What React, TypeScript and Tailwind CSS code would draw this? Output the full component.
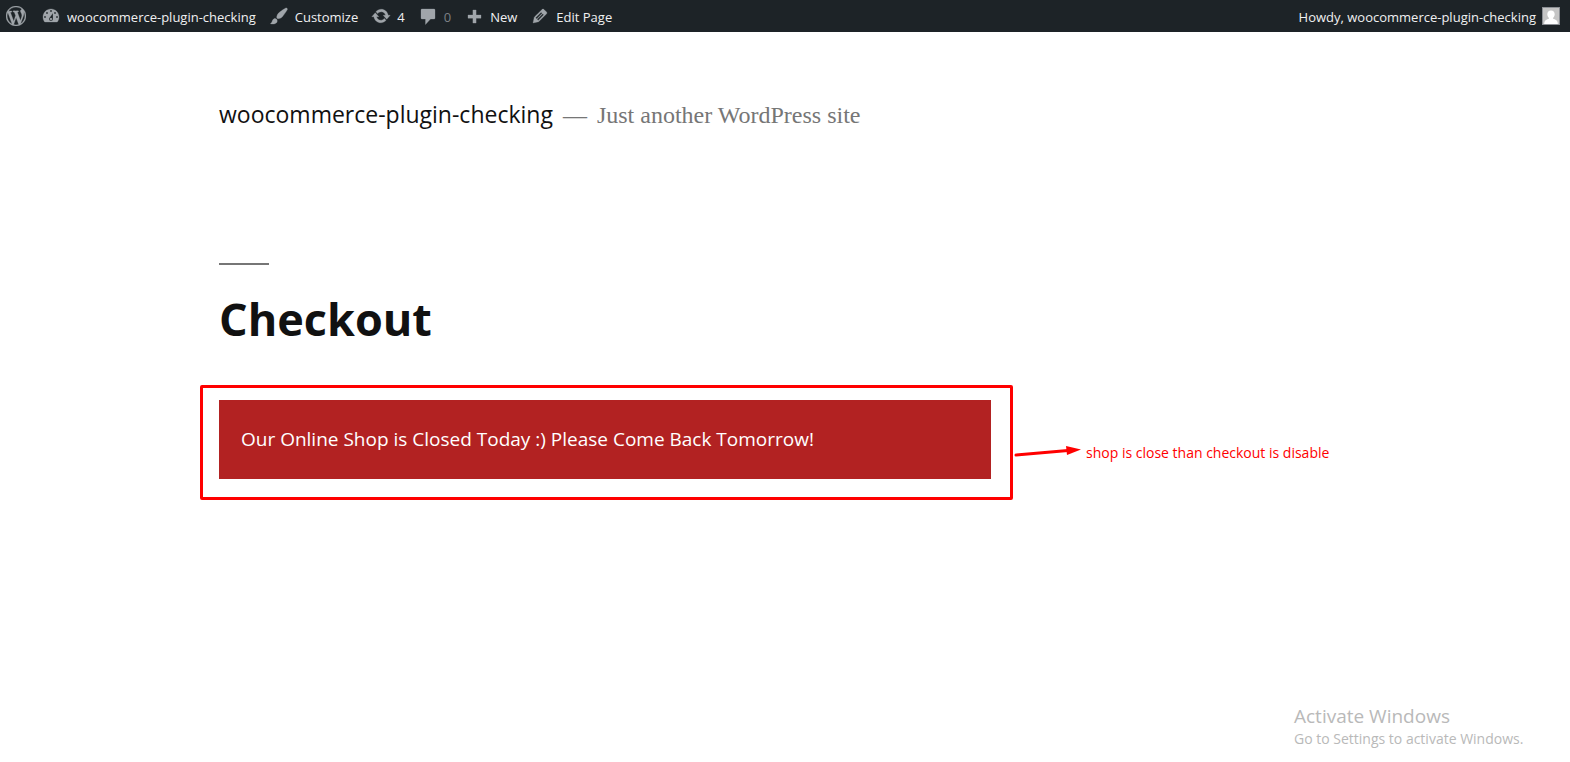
import type { ReactNode } from "react";

const ICONS = {
  wordpress:
    "M20 10c0-5.51-4.49-10-10-10C4.48 0 0 4.49 0 10c0 5.52 4.48 10 10 10 5.51 0 10-4.48 10-10zM7.78 15.37L4.37 6.22c.55-.02 1.17-.08 1.17-.08.5-.06.44-1.13-.06-1.11 0 0-1.45.11-2.37.11-.18 0-.37 0-.58-.01C4.12 2.69 6.87 1.11 10 1.11c2.33 0 4.45.87 6.05 2.34-.68-.11-1.65.39-1.65 1.58 0 .74.45 1.36.9 2.1.35.61.55 1.36.55 2.46 0 1.49-1.4 5-1.4 5l-3.03-8.37c.54-.02.82-.17.82-.17.5-.05.44-1.25-.06-1.22 0 0-1.44.12-2.38.12-.87 0-2.33-.12-2.33-.12-.5-.03-.56 1.2-.06 1.22l.92.08 1.26 3.41zM17.41 10c.24-.64.74-1.87.43-4.25.7 1.29 1.05 2.71 1.05 4.25 0 3.29-1.73 6.24-4.4 7.78.97-2.59 1.94-5.2 2.92-7.78zM6.1 18.09C3.12 16.65 1.11 13.53 1.11 10c0-1.3.23-2.48.72-3.59C3.25 10.3 4.67 14.2 6.1 18.09zm4.03-6.63l2.58 6.98c-.86.29-1.76.45-2.71.45-.79 0-1.57-.11-2.29-.33.81-2.38 1.62-4.74 2.42-7.1z",
  dashboard:
    "M3.76 16h12.48c1.1-1.37 1.76-3.11 1.76-5 0-4.42-3.58-8-8-8s-8 3.58-8 8c0 1.89.66 3.63 1.76 5zM10 4c.55 0 1 .45 1 1s-.45 1-1 1-1-.45-1-1 .45-1 1-1zM6 6c.55 0 1 .45 1 1s-.45 1-1 1-1-.45-1-1 .45-1 1-1zm8 0c.55 0 1 .45 1 1s-.45 1-1 1-1-.45-1-1 .45-1 1-1zm-5.37 5.55L12 7v6c0 1.1-.9 2-2 2s-2-.9-2-2c0-.57.24-1.08.63-1.45zM4 10c.55 0 1 .45 1 1s-.45 1-1 1-1-.45-1-1 .45-1 1-1zm12 0c.55 0 1 .45 1 1s-.45 1-1 1-1-.45-1-1 .45-1 1-1zm-5 3c0-.55-.45-1-1-1s-1 .45-1 1 .45 1 1 1 1-.45 1-1z",
  customize:
    "M18.33 3.57s.27-.8-.31-1.36c-.53-.52-1.22-.24-1.22-.24-.61.3-5.76 3.47-7.67 5.57-.86.96-2.06 3.79-1.09 4.82.92.98 3.96-.17 4.79-1 2.06-2.06 5.21-7.17 5.5-7.79zM1.4 17.65c2.37-1.56 1.46-3.41 3.23-4.64.93-.65 2.22-.62 3.08.29.63.67.8 2.57-.16 3.46-1.57 1.45-4 1.55-6.15.89z",
  update:
    "M10.2 3.28c3.53 0 6.43 2.61 6.92 6h2.08l-3.5 4-3.5-4h2.32c-.45-1.97-2.21-3.45-4.32-3.45-1.45 0-2.73.71-3.54 1.78L4.95 5.66C6.23 4.2 8.11 3.28 10.2 3.28zm-.4 13.44c-3.52 0-6.43-2.61-6.92-6H.8l3.5-4c1.17 1.33 2.33 2.67 3.5 4H5.48c.45 1.97 2.21 3.45 4.32 3.45 1.45 0 2.73-.71 3.54-1.78l1.71 1.95c-1.28 1.46-3.15 2.38-5.25 2.38z",
  comments: "M4 3h12c.6 0 1 .4 1 1v8c0 .6-.4 1-1 1h-3.500l-5 5.500v-5.500H4c-.6 0-1-.4-1-1V4c0-.6.4-1 1-1z",
  add: "M17 9v3.200h-4.900v4.900H8.900v-4.900H4V9h4.900V4h3.200v5z",
  edit: "M13.89 3.39l2.71 2.72c.46.46.42 1.24.03 1.64l-8.01 8.02-5.56 1.16 1.16-5.58s7.6-7.63 7.99-8.03c.39-.39 1.22-.39 1.68.07zm-2.73 2.79l-5.59 5.61 1.11 1.11 5.54-5.65zm-2.97 8.23l5.58-5.6-1.07-1.08-5.59 5.6z",
};

function Icon({ name }: { name: keyof typeof ICONS }) {
  return (
    <svg
      viewBox="0 0 20 20"
      className="size-5 shrink-0 fill-[#a0a5aa] stroke-[#a0a5aa]"
      strokeWidth="0.3"
      aria-hidden="true"
    >
      <path fillRule="evenodd" d={ICONS[name]} />
    </svg>
  );
}

function BarItem({ icon, children }: { icon: keyof typeof ICONS; children?: ReactNode }) {
  return (
    <a href="#" className="flex items-center gap-1.5 whitespace-nowrap">
      <Icon name={icon} />
      <span className="pt-0.5">{children}</span>
    </a>
  );
}

function AdminBar() {
  return (
    <nav
      aria-label="Toolbar"
      className="flex h-8 items-center justify-between bg-[#1d2327] pr-2.5 pl-1.5 text-[13px] leading-5 text-[#f0f0f1]"
    >
      <div className="flex items-center gap-[13px]">
        <a href="#" aria-label="About WordPress" className="pr-0.5">
          <Icon name="wordpress" />
        </a>
        <BarItem icon="dashboard">woocommerce-plugin-checking</BarItem>
        <BarItem icon="customize">Customize</BarItem>
        <BarItem icon="update">4</BarItem>
        <BarItem icon="comments">
          <span className="text-[#7c8085]">0</span>
        </BarItem>
        <BarItem icon="add">New</BarItem>
        <BarItem icon="edit">Edit Page</BarItem>
      </div>
      <a href="#" className="flex items-center gap-1.5 whitespace-nowrap">
        <span className="pt-0.5">Howdy, woocommerce-plugin-checking</span>
        <svg viewBox="0 0 18 18" className="size-[18px]" aria-hidden="true">
          <rect width="18" height="18" fill="#8c8f94" />
          <rect x="1" y="1" width="16" height="16" fill="#c5c5c5" />
          <path
            fill="#fff"
            d="M9 3.500c2.300 0 3.700 1.600 3.700 3.700 0 1.500-.7 2.900-1.600 3.600v1c2.200.6 3.900 1.500 4.400 3.200.2.600.3 1.300.3 2H2.200c0-.7.100-1.400.300-2 .5-1.700 2.200-2.600 4.400-3.200v-1c-.9-.7-1.600-2.100-1.600-3.600 0-2.100 1.400-3.700 3.700-3.700z"
          />
        </svg>
      </a>
    </nav>
  );
}

export default function App() {
  return (
    <div className="flex min-h-screen flex-col bg-white font-['Open_Sans','Noto_Sans',sans-serif] text-[#111]">
      <AdminBar />
      <header className="flex items-baseline gap-2.5 px-[219px] pt-16 leading-9">
        <a href="#" className="text-[23px]">
          woocommerce-plugin-checking
        </a>
        <p className="flex items-baseline gap-2.5 font-['Liberation_Serif',serif] text-[24px] text-[#767676]">
          <span>—</span>
          <span>Just another WordPress site</span>
        </p>
      </header>
      <main className="pt-[130px] pl-[200px]">
        <div className="ml-[19px] h-0.5 w-[50px] bg-[#767676]" />
        <h1 className="mt-6 ml-[19px] text-[45px] leading-[60px] font-bold">Checkout</h1>
        <div className="mt-9 flex items-center">
          <div className="w-[813px] rounded-xs border-3 border-[#ff0000] px-4 pt-3 pb-[18px]">
            <p
              role="alert"
              className="mr-[3px] bg-[#b22222] px-[22px] py-6 text-[19px] leading-[31px] text-white"
            >
              Our Online Shop is Closed Today :) Please Come Back Tomorrow!
            </p>
          </div>
          <div className="flex items-center gap-1 pt-5">
            <svg viewBox="0 0 68 24" className="ml-px h-6 w-[68px]" aria-hidden="true">
              <path d="M2 14L54 9.500" stroke="#ff0000" strokeWidth="3" strokeLinecap="round" />
              <path d="M52 5L67 8.500L53 14z" fill="#ff0000" />
            </svg>
            <p className="text-[14px] leading-5 text-[#ff0000]">
              shop is close than checkout is disable
            </p>
          </div>
        </div>
      </main>
      <aside className="mt-auto w-[276px] self-end pb-3 text-[#b9b9b9]">
        <p className="text-[19px] leading-6">Activate Windows</p>
        <p className="text-[14px] leading-[22px]">Go to Settings to activate Windows.</p>
      </aside>
    </div>
  );
}
